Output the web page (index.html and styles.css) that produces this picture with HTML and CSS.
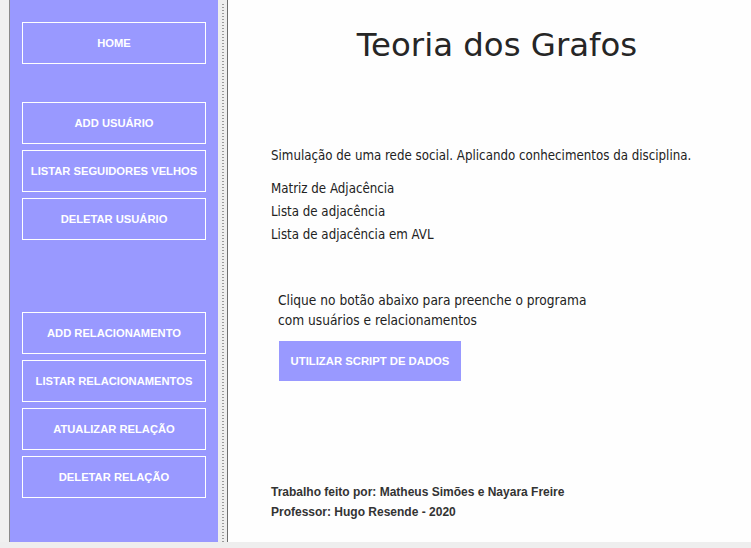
FILE: index.html
```html
<!DOCTYPE html>
<html lang="pt">
<head>
<meta charset="utf-8">
<title>Teoria dos Grafos</title>
<link rel="stylesheet" href="styles.css">
</head>
<body>
<div class="window">
  <div class="edge"></div>
  <nav class="sidebar">
    <div class="group group-home">
      <button class="nav-btn">HOME</button>
    </div>
    <div class="group group-users">
      <button class="nav-btn">ADD USUÁRIO</button>
      <button class="nav-btn">LISTAR SEGUIDORES VELHOS</button>
      <button class="nav-btn">DELETAR USUÁRIO</button>
    </div>
    <div class="group group-rel">
      <button class="nav-btn">ADD RELACIONAMENTO</button>
      <button class="nav-btn">LISTAR RELACIONAMENTOS</button>
      <button class="nav-btn">ATUALIZAR RELAÇÃO</button>
      <button class="nav-btn">DELETAR RELAÇÃO</button>
    </div>
  </nav>
  <div class="splitter"><div class="dots"></div></div>
  <main class="content">
    <h1 class="title">Teoria dos Grafos</h1>
    <p class="intro">Simulação de uma rede social. Aplicando conhecimentos da disciplina.</p>
    <ul class="topics">
      <li>Matriz de Adjacência</li>
      <li>Lista de adjacência</li>
      <li>Lista de adjacência em AVL</li>
    </ul>
    <div class="script-box">
      <p class="script-text">Clique no botão abaixo para preenche o programa<br>com usuários e relacionamentos</p>
      <button class="script-btn">UTILIZAR SCRIPT DE DADOS</button>
    </div>
    <footer class="credits">
      <p>Trabalho feito por: Matheus Simões e Nayara Freire</p>
      <p>Professor: Hugo Resende - 2020</p>
    </footer>
  </main>
</div>
</body>
</html>
```

FILE: styles.css
```css
* { box-sizing: border-box; }
html, body { margin: 0; padding: 0; }
body {
  background: #eeeeee;
  width: 751px;
  height: 548px;
  overflow: hidden;
  font-family: "DejaVu Sans Condensed", "DejaVu Sans", Tahoma, sans-serif;
}
.window {
  display: flex;
  height: 542px;
}
.edge {
  width: 9px;
  background: #f0f0f0;
}
.sidebar {
  width: 209px;
  background: #9999ff;
  border-left: 1px solid #8a8a8a;
  padding: 22px 12px 0 12px;
  display: flex;
  flex-direction: column;
}
.group {
  display: flex;
  flex-direction: column;
  gap: 6px;
}
.group-users { margin-top: 38px; }
.group-rel { margin-top: 72px; }
.nav-btn {
  width: 184px;
  height: 42px;
  background: transparent;
  border: 1px solid #ffffff;
  color: #ffffff;
  font-family: "Liberation Sans", Arial, sans-serif;
  font-weight: bold;
  font-size: 11.2px;
  padding: 0;
  margin: 0;
}
.splitter {
  width: 10px;
  background: #eeeeee;
  border-right: 1px solid #6e6e6e;
  display: flex;
  padding: 4px 0 0 4px;
}
.dots {
  width: 2px;
  height: 100%;
  background-image: repeating-linear-gradient(to bottom, #9a9a9a 0 1px, transparent 1px 3px);
}
.content {
  flex: 1;
  background: #fefefe;
  padding-left: 43px;
  color: #222222;
}
.title {
  margin: 23px 0 0 0;
  font-family: "DejaVu Sans", Tahoma, sans-serif;
  font-weight: normal;
  font-size: 32.4px;
  line-height: 44px;
  text-align: center;
  padding-right: 28px;
  color: #262626;
}
.intro {
  margin: 80px 0 0 0;
  font-size: 13.2px;
  line-height: 18px;
}
.topics {
  list-style: none;
  margin: 12px 0 0 0;
  padding: 0;
  font-size: 13.2px;
  line-height: 23px;
}
.script-box {
  margin-top: 44px;
  padding-left: 7px;
}
.script-text {
  margin: 0;
  font-size: 13.6px;
  line-height: 20px;
}
.script-btn {
  margin: 11px 0 0 1px;
  width: 182px;
  height: 40px;
  background: #9999ff;
  border: none;
  color: #ffffff;
  font-family: "Liberation Sans", Arial, sans-serif;
  font-weight: bold;
  font-size: 11.3px;
  padding: 0;
}
.credits {
  margin-top: 101px;
  font-family: "Liberation Sans", Arial, sans-serif;
  font-weight: bold;
  font-size: 12px;
  line-height: 20px;
  color: #333333;
}
.credits p { margin: 0; }
```
